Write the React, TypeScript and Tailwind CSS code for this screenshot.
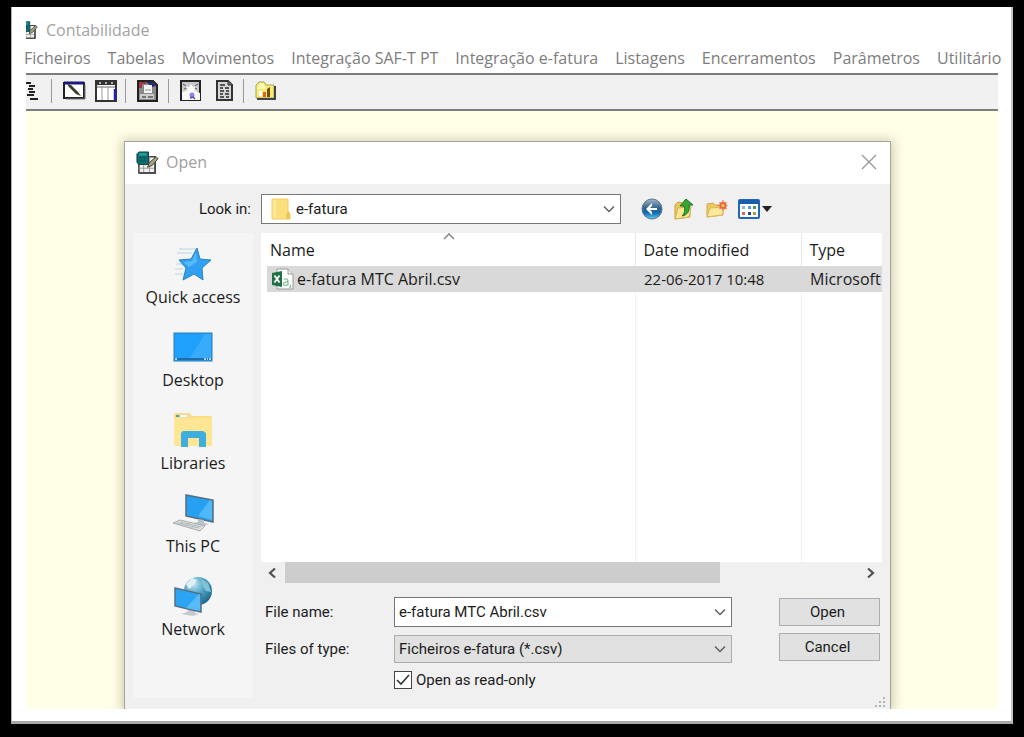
import { useState } from 'react';
import type { ReactNode } from 'react';

const menuItems = [
  'Ficheiros',
  'Tabelas',
  'Movimentos',
  'Integração SAF-T PT',
  'Integração e-fatura',
  'Listagens',
  'Encerramentos',
  'Parâmetros',
  'Utilitário',
];

const places = [
  { label: 'Quick access', icon: <StarIcon /> },
  { label: 'Desktop', icon: <DesktopIcon /> },
  { label: 'Libraries', icon: <LibrariesIcon /> },
  { label: 'This PC', icon: <PcIcon /> },
  { label: 'Network', icon: <NetworkIcon /> },
];

export default function App() {
  return (
    <div className="min-h-screen flex bg-black pt-[7px] pb-[13px] px-[11px] font-['Open_Sans',sans-serif] text-base leading-5 text-[#1c1c1c]">
      <div className="flex-1 min-w-0 flex flex-col bg-white border-l border-r-2 border-b-[3px] border-l-[#b0b0b0] border-r-[#c4c4c4] border-b-[#a8a8a8] pl-[14px] pr-[13px] pb-3">
        <header>
          <div className="flex items-center gap-2 pt-3 h-[34px] text-[#a2a2a2]">
            <span className="w-3 overflow-hidden flex justify-end"><LedgerIcon size={18} /></span>
            <h1>Contabilidade</h1>
          </div>
          <nav className="flex gap-[17px] h-8 pt-0.5 items-center -ml-0.5 whitespace-nowrap text-[#7d7d7d]">
            {menuItems.map((item) => (
              <a key={item} href="#">{item}</a>
            ))}
          </nav>
        </header>
        <Toolbar />
        <main className="flex-1 flex overflow-hidden bg-[#fffee6] pl-[98px] pr-[107px] pt-[30px]">
          <OpenDialog />
        </main>
      </div>
    </div>
  );
}

function Toolbar() {
  return (
    <div className="flex items-center h-[38px] bg-[#f0f0f0] border-y-2 border-[#7c7c7c] pb-0.5 overflow-hidden">
      <ToolButton label="Plano">
        <svg width="14" height="22" viewBox="0 0 14 22" stroke="#222" strokeWidth="2">
          <path d="M0 3h5M3 6h6M2 9h5M3 12h6M1 15h7M4 19h8" />
        </svg>
      </ToolButton>
      <Separator className="ml-[11px] mr-[11px]" />
      <ToolButton label="Lançamentos">
        <svg width="23" height="20" viewBox="0 0 23 20">
          <rect x="1" y="2" width="20" height="15" fill="#fff" stroke="#222" strokeWidth="2" />
          <path d="M1 2h20" stroke="#1a1a7a" strokeWidth="3" />
          <path d="M22 4v14H3" stroke="#777" fill="none" />
          <path d="M4 3l4 1 7 7 3 4-5-2-7-7z" fill="#3a3a28" />
        </svg>
      </ToolButton>
      <ToolButton label="Mapa" className="ml-[9px]">
        <svg width="23" height="23" viewBox="0 0 23 23">
          <rect x="1" y="1" width="20" height="20" fill="#fff" stroke="#333" strokeWidth="2" />
          <path d="M1 3h20" stroke="#333" strokeWidth="4" />
          <path d="M4 3h2M10 3h2M16 3h2" stroke="#ddd" strokeWidth="1.5" />
          <path d="M2 7h18" stroke="#666" />
          <path d="M7 7v13M13 7v13" stroke="#999" />
          <path d="M20 9v11" stroke="#2424a8" strokeWidth="2.5" />
        </svg>
      </ToolButton>
      <Separator className="ml-[7px] mr-[11px]" />
      <ToolButton label="Documentos">
        <svg width="21" height="23" viewBox="0 0 21 23">
          <path d="M1 1h15l4 4v16H1z" fill="#8a8a8a" stroke="#222" strokeWidth="2" />
          <path d="M2 2h7v2H5v4H2z" fill="#a03642" />
          <path d="M9 2h7l3 4-4 1z" fill="#29296f" />
          <path d="M7 5h8v8H7z" fill="#f2f2f2" />
          <path d="M8 10h6" stroke="#999" />
          <path d="M3 14h14v5H3z" fill="#ccc" />
          <path d="M5 17h4M11 17h5" stroke="#555" strokeWidth="1.5" />
        </svg>
      </ToolButton>
      <Separator className="ml-[10px] mr-[11px]" />
      <ToolButton label="Balancete">
        <svg width="21" height="22" viewBox="0 0 21 22">
          <rect x="1" y="1" width="19" height="19" fill="#c9c9c9" stroke="#222" strokeWidth="2" />
          <path d="M2 12l4-1 2-2-3-3 4 1 2-3 2 3 4-1-3 3 3 3 3 1v7H2z" fill="#fafafa" />
          <path d="M3 4l3 2M18 4l-3 2M4 9l2-1M17 9l-2-1" stroke="#555" />
          <circle cx="12" cy="15" r="2.5" fill="#8a8ade" />
          <path d="M10 18l3-1 2 2" stroke="#4d4dba" strokeWidth="1.5" fill="none" />
        </svg>
      </ToolButton>
      <ToolButton label="Extracto" className="ml-[15px]">
        <svg width="17" height="22" viewBox="0 0 17 22">
          <path d="M1 1h11l4 4v15H1z" fill="#d6d6d6" stroke="#333" strokeWidth="2" />
          <path d="M12 1v4h4" fill="#777" stroke="#333" />
          <path d="M4 5h5M4 8h3M9 8h4M4 11h4M10 11h3M4 14h3M9 14h4M4 17h4M10 17h3" stroke="#555" strokeWidth="1.8" />
        </svg>
      </ToolButton>
      <Separator className="ml-[10px] mr-[11px]" />
      <ToolButton label="Abrir">
        <svg width="22" height="20" viewBox="0 0 22 20">
          <path d="M1 17V4l3-3h5l2 3h8v13z" fill="#f5ee73" stroke="#a8a25a" />
          <path d="M2 5l4-3h2l2 3v3H2z" fill="#fcf9b0" />
          <path d="M20 5v13H2" stroke="#444" strokeWidth="2" fill="none" />
          <path d="M8 16v-5h3v5z" fill="#d8642c" />
          <path d="M12 16V8l3-2v10z" fill="#7a4a1f" />
          <path d="M4 10h3v5H4z" fill="#fff" />
        </svg>
      </ToolButton>
    </div>
  );
}

function ToolButton({ label, className = '', children }: { label: string; className?: string; children: ReactNode }) {
  return <button type="button" aria-label={label} className={`shrink-0 ${className}`}>{children}</button>;
}

function Separator({ className }: { className: string }) {
  return <span className={`w-px h-6 bg-[#999] shrink-0 ${className}`} />;
}

function OpenDialog() {
  const [fileName, setFileName] = useState('e-fatura MTC Abril.csv');
  const [readOnly, setReadOnly] = useState(true);

  return (
    <section role="dialog" aria-labelledby="dialog-title" className="flex-1 min-w-0 flex flex-col bg-[#f0f0f0] border border-b-0 border-[#a5a698] shadow-[0_1px_10px_2px_rgba(90,90,60,0.3)]">
      {/* Title bar */}
      <div className="flex items-center h-[42px] bg-white pl-[11px] pr-3 pb-0.5">
        <LedgerIcon size={23} />
        <h2 id="dialog-title" className="ml-[7px] flex-1 text-[#a0a0a0]">Open</h2>
        <button type="button" aria-label="Close">
          <svg width="18" height="18" viewBox="0 0 18 18" stroke="#999" strokeWidth="1.4"><path d="M2 2l14 14M16 2L2 16" /></svg>
        </button>
      </div>

      <div className="flex-1 flex flex-col gap-[9px] pt-[10px] pb-[11px] px-2 relative">
        {/* Look in */}
        <div className="flex items-center h-[30px] font-['Roboto',sans-serif] text-[15px]">
          <label htmlFor="look-in" className="w-[118px] text-right mr-[10px]">Look in:</label>
          <div className="relative w-[360px] h-full">
            <select id="look-in" className="appearance-none w-full h-full bg-white border border-[#777] pl-[34px] pr-8">
              <option>e-fatura</option>
            </select>
            <span className="absolute left-[10px] top-1 pointer-events-none"><FolderIcon /></span>
            <span className="absolute right-[5px] top-[11px] pointer-events-none"><Chevron /></span>
          </div>
          <div className="flex items-center gap-[10px] ml-5">
            <button type="button" aria-label="Back"><BackIcon /></button>
            <button type="button" aria-label="Up one level"><UpIcon /></button>
            <button type="button" aria-label="New folder"><NewFolderIcon /></button>
            <button type="button" aria-label="View menu"><ViewIcon /></button>
          </div>
        </div>

        <div className="flex-1 flex gap-2">
          {/* Places bar */}
          <div className="w-[120px] shrink-0 bg-[#f5f5f5] pt-[10px]">
            {places.map((place) => (
              <button key={place.label} type="button" className="flex flex-col items-center gap-0.5 w-full h-[83px]">
                <span className="h-[42px] flex items-center">{place.icon}</span>
                <span>{place.label}</span>
              </button>
            ))}
          </div>

          <div className="flex-1 min-w-0 flex flex-col">
            <FileList />
            {/* Horizontal scroll bar */}
            <div className="flex items-center h-[21px] px-[6px]">
              <svg width="12" height="12" viewBox="0 0 12 12" fill="none" stroke="#505050" strokeWidth="2.2"><path d="M8 1.5L3 6l5 4.5" /></svg>
              <div className="flex-1 h-full mx-[6px]">
                <div className="w-[76%] h-full bg-[#cdcdcd]" />
              </div>
              <svg width="12" height="12" viewBox="0 0 12 12" fill="none" stroke="#505050" strokeWidth="2.2"><path d="M4 1.5L9 6l-5 4.5" /></svg>
            </div>

            <form className="flex mt-[14px] pl-1 pr-[2px] font-['Roboto',sans-serif] text-[15px]" onSubmit={(e) => e.preventDefault()}>
              <div className="flex-1 grid grid-cols-[129px_1fr] gap-y-2 items-center">
                <label htmlFor="file-name">File name:</label>
                <div className="relative h-[30px]">
                  <input
                    id="file-name"
                    value={fileName}
                    onChange={(e) => setFileName(e.target.value)}
                    className="w-full h-full bg-white border border-[#777] pl-1 pr-8"
                  />
                  <button type="button" aria-label="Recent files" className="absolute right-[5px] top-[11px]"><Chevron /></button>
                </div>
                <label htmlFor="file-type">Files of type:</label>
                <div className="relative h-[28px]">
                  <select id="file-type" className="appearance-none w-full h-full bg-[#e1e1e1] border border-[#adadad] pl-1 pr-8">
                    <option>Ficheiros e-fatura (*.csv)</option>
                  </select>
                  <span className="absolute right-[5px] top-[10px] pointer-events-none"><Chevron /></span>
                </div>
                <label className="col-start-2 flex items-center gap-1 leading-[18px]">
                  <span className="relative size-[18px]">
                    <input
                      type="checkbox"
                      checked={readOnly}
                      onChange={(e) => setReadOnly(e.target.checked)}
                      className="block appearance-none size-full bg-white border border-[#444]"
                    />
                    {readOnly && (
                      <svg className="absolute inset-0 pointer-events-none" width="18" height="18" viewBox="0 0 18 18" fill="none" stroke="#333" strokeWidth="1.6"><path d="M3 9l4 4 8-9" /></svg>
                    )}
                  </span>
                  Open as read-only
                </label>
              </div>
              <div className="w-[101px] ml-[47px] mt-px flex flex-col gap-[7px]">
                <button type="submit" className="h-7 bg-[#e1e1e1] border border-[#adadad] pr-1">Open</button>
                <button type="button" className="h-7 bg-[#e1e1e1] border border-[#adadad] pr-1">Cancel</button>
              </div>
            </form>
          </div>
        </div>

        {/* Resize grip */}
        <svg className="absolute right-1 bottom-0" width="12" height="12" viewBox="0 0 12 12" fill="#b5b5b5">
          <path d="M9 0h2v2H9zM9 4h2v2H9zM5 4h2v2H5zM9 8h2v2H9zM5 8h2v2H5zM1 8h2v2H1z" />
        </svg>
      </div>
    </section>
  );
}

function FileList() {
  return (
    <div className="bg-white pl-[6px] overflow-hidden">
      <table className="w-full table-fixed text-left whitespace-nowrap">
        <colgroup>
          <col />
          <col className="w-[166px]" />
          <col className="w-[81px]" />
        </colgroup>
        <thead>
          <tr className="h-[33px]">
            <th className="relative font-normal pl-[3px]">
              Name
              <svg className="absolute left-1/2 top-0 -ml-2" width="12" height="7" viewBox="0 0 12 7" fill="none" stroke="#8a8a8a" strokeWidth="1.6"><path d="M1 6l5-5 5 5" /></svg>
            </th>
            <th className="font-normal pl-2 border-l border-[#e8e8e8]">Date modified</th>
            <th className="font-normal pl-2 border-l border-[#e8e8e8]">Type</th>
          </tr>
        </thead>
        <tbody>
          <tr className="h-[26px] bg-[#d9d9d9]">
            <td className="pl-1">
              <span className="flex items-center gap-[3px]"><CsvIcon />e-fatura MTC Abril.csv</span>
            </td>
            <td className="pl-[9px] text-[15px]">22-06-2017 10:48</td>
            <td className="pl-[9px]">Microsoft</td>
          </tr>
          <tr className="h-[270px]">
            <td />
            <td className="border-l border-[#f1f1f6]" />
            <td className="border-l border-[#f1f1f6]" />
          </tr>
        </tbody>
      </table>
    </div>
  );
}

function Chevron() {
  return (
    <svg width="14" height="9" viewBox="0 0 14 9" fill="none" stroke="#606060" strokeWidth="1.5"><path d="M2 1.5l5 5 5-5" /></svg>
  );
}

function LedgerIcon({ size }: { size: number }) {
  return (
    <svg className="shrink-0" width={size} height={size} viewBox="0 0 24 24">
      <path d="M3 6h17v17H3z" fill="#f2f2ee" stroke="#444" strokeWidth="1.6" />
      <path d="M3 18h17M8 14v9M14 6v17M12 12h8" stroke="#999" />
      <path d="M20 7v16H4" fill="none" stroke="#444" strokeWidth="1.6" />
      <path d="M1 3l2-2h10v13H3l-2-2z" fill="#0b6f70" stroke="#0b3f44" />
      <path d="M3 2h8v3H3z" fill="#27999a" />
      <path d="M4 7h2M8 7h2M4 10h2M8 10h2" stroke="#064f56" strokeWidth="1.5" />
      <path d="M12 17l2-5 7-6 2 2-6 7z" fill="#a3a183" stroke="#45453a" />
    </svg>
  );
}

function FolderIcon() {
  return (
    <svg width="20" height="22" viewBox="0 0 20 22">
      <path d="M1 1h16v12l2 3v5H1z" fill="#fbdf7d" stroke="#efcd64" />
      <path d="M2 2h3v18H2z" fill="#ffe999" />
      <path d="M15 16l2-3 2 3v5h-4z" fill="#f0c954" />
    </svg>
  );
}

function CsvIcon() {
  return (
    <svg width="23" height="22" viewBox="0 0 23 22">
      <path d="M6 1h11l5 5v15H6z" fill="#fff" stroke="#999" />
      <path d="M17 1v5h5" fill="#eee" stroke="#999" />
      <path d="M13 11.5c2-1.5 4-.5 4 1.5v4.5M17 14c-3-.5-4.5.5-4.5 2s3 2.5 4.5 0M19.5 17v1.5l-1 1.5" fill="none" stroke="#77ba91" strokeWidth="1.2" />
      <path d="M1 5l10-2v16L1 17z" fill="#1e7145" />
      <path d="M3.5 7.5l5 7M8.5 7.5l-5 7" stroke="#fff" strokeWidth="1.8" />
    </svg>
  );
}

function BackIcon() {
  return (
    <svg width="22" height="22" viewBox="0 0 22 22">
      <defs>
        <linearGradient id="back-fill" x1="0" y1="0" x2="0" y2="1">
          <stop offset="0" stopColor="#a5b8c8" />
          <stop offset="0.45" stopColor="#33628a" />
          <stop offset="0.7" stopColor="#146caf" />
          <stop offset="1" stopColor="#5ed1f3" />
        </linearGradient>
      </defs>
      <circle cx="11" cy="11" r="10" fill="url(#back-fill)" stroke="#5f7890" />
      <path d="M11 5l-6 6 6 6v-3l-2-2h7v-2H9l2-2z" fill="#fff" />
    </svg>
  );
}

function UpIcon() {
  return (
    <svg width="22" height="22" viewBox="0 0 22 22">
      <path d="M2 7l3-3 4 1 1 2 7 1v11L2 21z" fill="#e9c65c" stroke="#c7a246" />
      <path d="M2 21l3-11 13-1-2 10z" fill="#fbe795" stroke="#d5b251" />
      <path d="M9 18c3-2 3-7 2-10H7l6-7 7 6h-4c1 5-1 10-7 11z" fill="#35a62f" stroke="#1c7423" />
    </svg>
  );
}

function NewFolderIcon() {
  return (
    <svg width="23" height="22" viewBox="0 0 23 22">
      <path d="M2 6l6-1 2 2h8v10L2 19z" fill="#eccb65" stroke="#d3ac4c" />
      <path d="M2 19l3-9 15-1-3 8z" fill="#fde999" stroke="#d9b655" />
      <path d="M18 2v11M12.5 7.5h10M14.500 4l7 7M21.500 4l-7 7" stroke="#f08a62" strokeWidth="1.5" />
      <circle cx="18" cy="7.5" r="3.5" fill="#e9673f" />
      <circle cx="18" cy="7.5" r="1.5" fill="#ffd45c" />
    </svg>
  );
}

function ViewIcon() {
  return (
    <svg width="34" height="22" viewBox="0 0 34 22">
      <rect x="1" y="2" width="20" height="18" rx="1" fill="#fff" stroke="#2267b5" strokeWidth="2" />
      <path d="M1 4h20" stroke="#1b5cb0" strokeWidth="4" />
      <path d="M4 8h3v3H4z" fill="#8fb4de" />
      <path d="M10 8h3v3h-3z" fill="#5b9bd0" />
      <path d="M15 8h3v3h-3z" fill="#3d9c57" />
      <path d="M4 14h3v3H4z" fill="#d9665a" />
      <path d="M10 14h3v3h-3z" fill="#27468f" />
      <path d="M15 14h3v3h-3z" fill="#a3a13f" />
      <path d="M24 8h10l-5 6z" fill="#222" />
    </svg>
  );
}

function StarIcon() {
  return (
    <svg width="36" height="36" viewBox="0 0 36 36">
      <path d="M4 3h17M2 7h15M1 18h8M0 23h8M0 28h8" stroke="#b9d4e4" />
      <path d="M22 2l3 11 11 1-9 8 1 12-9-6-11 6 3-12-7-8 12-1z" fill="#2fa0f2" stroke="#2583c4" strokeLinejoin="round" />
      <path d="M21 6l-4 9-9 1 6 5 8-5z" fill="#56b9f8" />
    </svg>
  );
}

function DesktopIcon() {
  return (
    <svg width="40" height="30" viewBox="0 0 40 30">
      <rect x="1" y="1" width="38" height="28" fill="#1ea0fb" stroke="#2b7fb4" />
      <path d="M17 26L32 2h6v24z" fill="#38acfb" />
      <path d="M1.5 27h37" stroke="#1a6fab" strokeWidth="2" />
      <path d="M2 27h2M31 27h2M34 27h1M36 27h2" stroke="#d4efff" strokeWidth="1.5" />
    </svg>
  );
}

function LibrariesIcon() {
  return (
    <svg width="40" height="36" viewBox="0 0 40 36">
      <path d="M1 2l2-1h14l2 3h20v30H1z" fill="#fbdf83" />
      <path d="M1 6h38v28H1z" fill="#ffe694" />
      <rect x="2" y="2" width="15" height="4" rx="2" fill="#e9dda2" />
      <path d="M3 4h3" stroke="#4ba488" strokeWidth="2" />
      <path d="M8 4h6" stroke="#fff" strokeWidth="2" />
      <path d="M8 35V21l2-2h20l3 2v14h-7v-9H15v9z" fill="#3eaede" />
    </svg>
  );
}

function PcIcon() {
  return (
    <svg width="42" height="38" viewBox="0 0 42 38">
      <path d="M14 1l27 5v22l-27-6z" fill="#28a0f2" stroke="#566d7c" strokeWidth="1.5" />
      <path d="M26 22L38 6l2 1v19z" fill="#50b7fa" />
      <path d="M26 25l6 1v3l5 1-5 2-11-3 5-1z" fill="#b8c2c8" />
      <path d="M1 29l7-3 25 6-5 5z" fill="#dce0e2" stroke="#a7adb0" />
      <path d="M5 29l22 5M8 28l21 5M12 28l-5 3M18 29l-5 3M24 31l-5 3" stroke="#b5babd" />
    </svg>
  );
}

function NetworkIcon() {
  return (
    <svg width="38" height="40" viewBox="0 0 38 40">
      <defs>
        <radialGradient id="globe-fill" cx="0.35" cy="0.25" r="0.8">
          <stop offset="0" stopColor="#c5e4ef" />
          <stop offset="0.5" stopColor="#4ba3c3" />
          <stop offset="1" stopColor="#1d6287" />
        </radialGradient>
      </defs>
      <circle cx="24" cy="15" r="14" fill="url(#globe-fill)" />
      <path d="M12 8l6-6 5 2-3 5-5 4z" fill="#e0eff3" />
      <path d="M27 3l7 4 3 9-5-1-3-5z" fill="#82c2d7" />
      <path d="M14 33l7 2v2l4 1-6 2-12-2 6-2z" fill="#c2cacf" />
      <path d="M1 12l26 6v18L1 30z" fill="#2da4f3" stroke="#557083" strokeWidth="1.5" />
      <path d="M12 32L25 18l1 1v16z" fill="#58bbf9" />
    </svg>
  );
}
